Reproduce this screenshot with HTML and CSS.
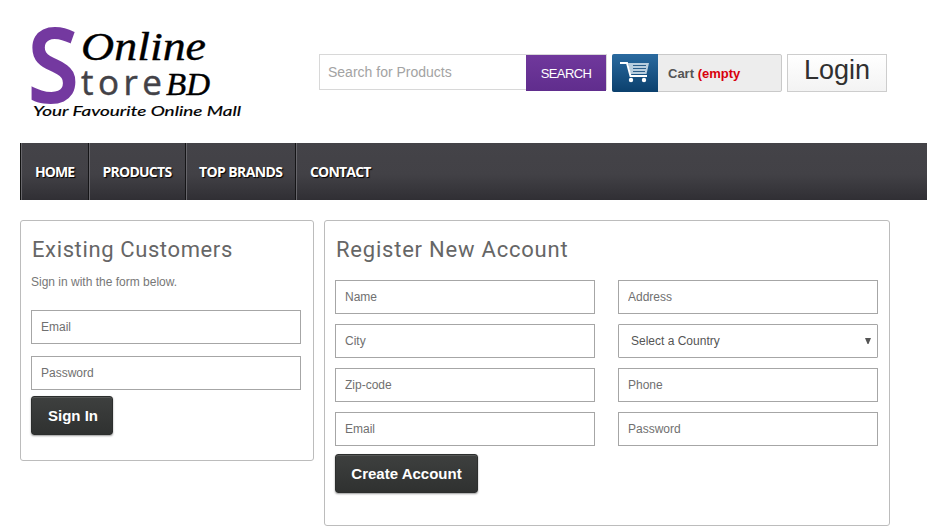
FILE: index.html
```
<!DOCTYPE html>
<html lang="en">
<head>
<meta charset="utf-8">
<title>Online Store BD</title>
<link rel="stylesheet" href="styles.css">
</head>
<body>
<header class="header">
  <svg class="logo" width="230" height="110" viewBox="20 18 230 110" role="img" aria-label="Online Store BD">
    <text class="logo-s" transform="translate(28 101.500) scale(.9 1)">S</text>
    <text class="script" x="81" y="59.500" font-size="41" textLength="125" lengthAdjust="spacingAndGlyphs">Online</text>
    <text class="logo-tore" x="81" y="95" textLength="81">tore</text>
    <text class="script" x="166" y="95" font-size="32" textLength="44" lengthAdjust="spacingAndGlyphs">BD</text>
    <text class="script tagline" x="33" y="116" font-size="14" textLength="208" lengthAdjust="spacingAndGlyphs">Your Favourite Online Mall</text>
  </svg>
  <form class="search">
    <input type="text" placeholder="Search for Products">
    <button type="button">SEARCH</button>
  </form>
  <a class="cart">
    <span class="cart-icon">
      <svg width="46" height="38" viewBox="0 0 46 38">
        <path d="M16 9H37L34.500 20H18.500Z" fill="#b9cede"/>
        <path d="M21 11.500H34M21 14.500H34M21 17.500H33" stroke="#2c5f8a" stroke-width="1"/>
        <path d="M8 9H15L18.500 22H35" fill="none" stroke="#fff" stroke-width="2"/>
        <circle cx="19" cy="26" r="2.200" fill="#fff"/><circle cx="32" cy="26" r="2.200" fill="#fff"/>
      </svg>
    </span>
    <span class="cart-text">Cart <b>(empty</b></span>
  </a>
  <a class="login">Login</a>
</header>
<nav class="nav">
  <a class="home">HOME</a><a class="products">PRODUCTS</a><a class="brands">TOP BRANDS</a><a class="contact">CONTACT</a>
</nav>
<main class="main">
  <section class="panel signin">
    <h3>Existing Customers</h3>
    <p>Sign in with the form below.</p>
    <input type="text" placeholder="Email">
    <input type="text" placeholder="Password">
    <button class="btn" type="button">Sign In</button>
  </section>
  <section class="panel register">
    <h3>Register New Account</h3>
    <div class="fields">
      <input type="text" placeholder="Name">
      <input type="text" placeholder="Address">
      <input type="text" placeholder="City">
      <div class="select"><span>Select a Country</span><svg width="6" height="6" viewBox="0 0 6 6"><path d="M0 0H6L3.500 6H2.500Z" fill="#555"/></svg></div>
      <input type="text" placeholder="Zip-code">
      <input type="text" placeholder="Phone">
      <input type="text" placeholder="Email">
      <input type="text" placeholder="Password">
    </div>
    <button class="btn" type="button">Create Account</button>
  </section>
</main>
</body>
</html>
```
FILE: styles.css
```
* { box-sizing: border-box; }
html { overflow: hidden; }
body {
  margin: 0;
  padding: 0 8px 0 20px;
  height: 529px;
  background: #fff;
  font-family: "Liberation Sans", Arial, sans-serif;
}
.header { display: flex; height: 143px; align-items: flex-start; }
.logo { margin: 18px 69px 0 0; flex: none; overflow: visible; }
.logo-s { font: 600 102px "Open Sans", sans-serif; fill: #7439a0; stroke: #7439a0; stroke-width: 2px; }
.logo-tore { font: 400 35px "Open Sans", sans-serif; fill: #434247; stroke: #434247; stroke-width: .5px; }
.script { font-family: "Liberation Serif", serif; font-style: italic; fill: #000; stroke: #000; stroke-width: .4px; }
.tagline { font-family: Lato, sans-serif; stroke-width: .2px; }
.search {
  display: flex;
  width: 288px;
  height: 36px;
  margin: 54px 5px 0 0;
  border: 1px solid #d8d8d8;
}
.search input {
  width: 206px;
  height: 34px;
  padding: 0 8px;
  border: 0;
  background: none;
  font: 14px "Liberation Sans", Arial, sans-serif;
}
.search input::placeholder { color: #a3a3a3; }
.search button {
  width: 80px;
  height: 36px;
  flex: none;
  padding: 0;
  border: 0;
  background: linear-gradient(#70389c, #602d8d);
  color: #fff;
  font: 13px "Liberation Sans", Arial, sans-serif;
  letter-spacing: -.6px;
}
.cart {
  display: flex;
  width: 170px;
  height: 38px;
  margin: 54px 5px 0 0;
  border: 1px solid #c9c9c9;
  border-radius: 2px;
  background: #ededed;
}
.cart-icon {
  width: 46px;
  height: 38px;
  margin: -1px 0 0 -1px;
  border-radius: 2px 0 0 2px;
  background: linear-gradient(#2a6a9f, #0b406d);
}
.cart-icon svg { display: block; }
.cart-text { margin-left: 10px; color: #555; font-size: 13px; line-height: 37px; font-weight: bold; }
.cart-text b { color: #d8000c; }
.login {
  width: 100px;
  height: 38px;
  margin-top: 54px;
  border: 1px solid #cdcdcd;
  background: linear-gradient(#fff, #f3f3f3);
  color: #303030;
  font-size: 27px;
  line-height: 30px;
  text-align: center;
}
.nav {
  display: flex;
  height: 57px;
  border-left: 1px solid #111;
  background: linear-gradient(#444348 0%, #424146 55%, #302f34 100%);
}
.nav a {
  flex: none;
  padding-left: 13px;
  border-left: 1px solid #67666b;
  border-right: 1px solid #151517;
  color: #fff;
  font: bold 14px/58px "Open Sans", sans-serif;
  text-shadow: 1px 1px 1px #000;
  white-space: nowrap;
}
.nav .home { width: 68px; letter-spacing: -.95px; }
.nav .products { width: 97px; letter-spacing: -.75px; padding-left: 12.5px; }
.nav .brands { width: 110px; letter-spacing: -.6px; padding-left: 12px; }
.nav .contact { border-right: 0; letter-spacing: -.8px; }
.main { display: flex; align-items: flex-start; gap: 10px; padding-top: 20px; }
.panel { flex: none; border: 1px solid #bcbcbc; border-radius: 3px; }
.signin { width: 294px; height: 241px; padding: 0 10px; }
.register { width: 566px; height: 306px; padding: 0 10px; }
h3 {
  margin: 13px 0 0 1px;
  height: 31px;
  color: #666;
  font: 22px/32px Roboto, sans-serif;
  white-space: nowrap;
}
.signin h3 { letter-spacing: .62px; }
.register h3 { letter-spacing: .78px; }
p { margin: 9px 0 20px; height: 16px; color: #777; font-size: 12px; line-height: 16px; }
.panel input, .select {
  display: block;
  height: 34px;
  padding: 0 9px;
  border: 1px solid #a6a6a6;
  border-radius: 0;
  background: #fff;
  font: 12px "Liberation Sans", Arial, sans-serif;
}
.panel input::placeholder { color: #707070; }
.signin input { width: 270px; margin-bottom: 12px; }
.signin input + .btn { margin-top: -6px; }
.fields { display: grid; grid-template-columns: 260px 260px; gap: 10px 23px; margin-top: 15px; }
.panel .select {
  display: flex;
  align-items: center;
  justify-content: space-between;
  padding: 0 6px 0 12px;
  border-radius: 1px;
  color: #555;
}
.btn {
  display: block;
  height: 39px;
  padding: 0;
  border: 1px solid #2c2e2d;
  border-radius: 3px;
  background: linear-gradient(#3e403f, #2f3130);
  box-shadow: 0 1px 2px rgba(0,0,0,.4), inset 0 1px 0 #555756;
  color: #fff;
  font: bold 15px "Liberation Sans", Arial, sans-serif;
}
.signin .btn { width: 82px; padding-left: 2px; }
.register .btn { width: 143px; margin-top: 8px; }
```
